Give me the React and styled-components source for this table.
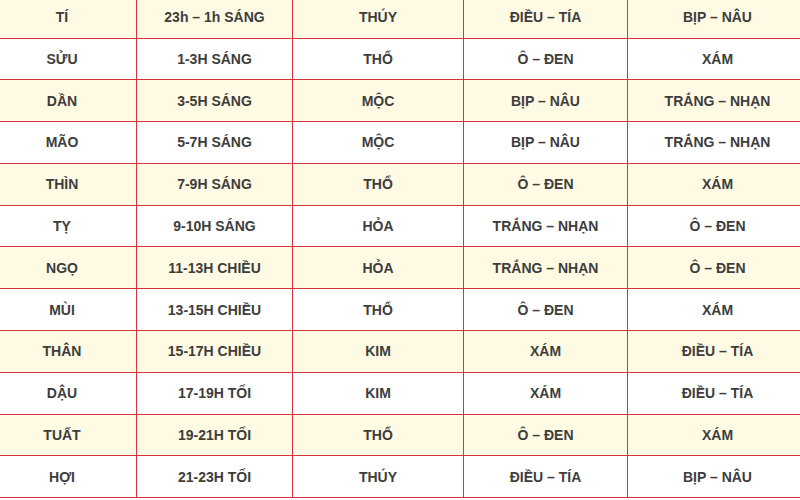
import React from 'react';
import styled, { createGlobalStyle } from 'styled-components';

const GlobalStyle = createGlobalStyle`
  html, body {
    margin: 0;
    padding: 0;
    background: #fff;
    overflow: hidden;
  }
`;

const Page = styled.div`
  width: 800px;
  height: 500px;
  overflow: hidden;
`;

const Table = styled.div`
  width: 820px;
  margin: -3.3px 0 0 -12px;
  font-family: 'Liberation Sans', Arial, sans-serif;
  font-weight: 700;
  font-size: 14px;
  color: #3d3d3d;
`;

const Row = styled.div`
  display: grid;
  grid-template-columns: 149px 156px 171px 164px 180px;
  height: 41.8px;
  box-sizing: border-box;
  border-bottom: 1px solid #d8323c;
  background: ${props => (props.shaded ? '#fffae3' : '#ffffff')};
`;

const Cell = styled.div`
  display: flex;
  align-items: center;
  justify-content: center;
  box-sizing: border-box;
  border-right: 1px solid #d8323c;
  white-space: nowrap;
`;

const rows = [
  ['TÍ', '23h – 1h SÁNG', 'THÚY', 'ĐIỀU – TÍA', 'BỊP – NÂU'],
  ['SỬU', '1-3H SÁNG', 'THỔ', 'Ô – ĐEN', 'XÁM'],
  ['DẦN', '3-5H SÁNG', 'MỘC', 'BỊP – NÂU', 'TRẮNG – NHẠN'],
  ['MÃO', '5-7H SÁNG', 'MỘC', 'BỊP – NÂU', 'TRẮNG – NHẠN'],
  ['THÌN', '7-9H SÁNG', 'THỔ', 'Ô – ĐEN', 'XÁM'],
  ['TỴ', '9-10H SÁNG', 'HỎA', 'TRẮNG – NHẠN', 'Ô – ĐEN'],
  ['NGỌ', '11-13H CHIỀU', 'HỎA', 'TRẮNG – NHẠN', 'Ô – ĐEN'],
  ['MÙI', '13-15H CHIỀU', 'THỔ', 'Ô – ĐEN', 'XÁM'],
  ['THÂN', '15-17H CHIỀU', 'KIM', 'XÁM', 'ĐIỀU – TÍA'],
  ['DẬU', '17-19H TỐI', 'KIM', 'XÁM', 'ĐIỀU – TÍA'],
  ['TUẤT', '19-21H TỐI', 'THỔ', 'Ô – ĐEN', 'XÁM'],
  ['HỢI', '21-23H TỐI', 'THÚY', 'ĐIỀU – TÍA', 'BỊP – NÂU'],
];

const App = () => (
  <Page>
    <GlobalStyle />
    <Table>
      {rows.map((row, i) => (
        <Row key={row[0]} shaded={i % 2 === 0}>
          {row.map((text, j) => (
            <Cell key={j}>{text}</Cell>
          ))}
        </Row>
      ))}
    </Table>
  </Page>
);

export default App;
